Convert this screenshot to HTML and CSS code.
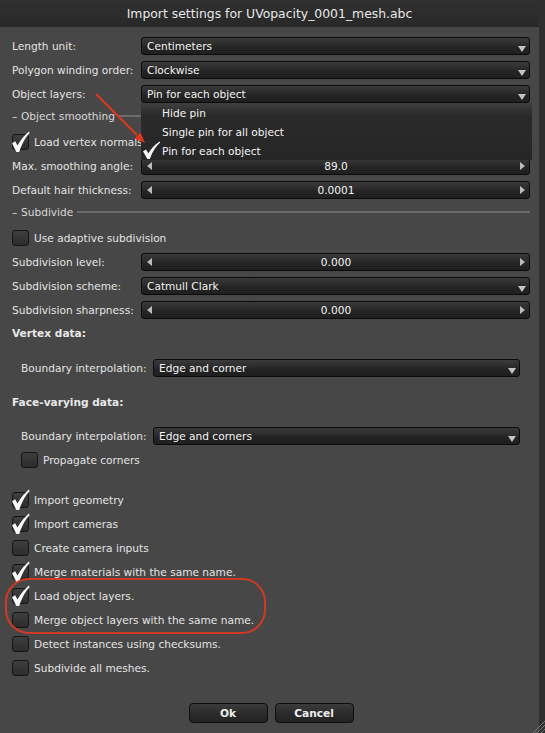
FILE: index.html
```html
<!DOCTYPE html>
<html>
<head>
<meta charset="utf-8">
<link rel="stylesheet" href="styles.css">
</head>
<body>
<div class="dialog">
  <div class="titlebar">Import settings for UVopacity_0001_mesh.abc</div>
  <div class="content">
    <div class="row">
      <span class="label">Length unit:</span>
      <div class="combo"><span>Centimeters</span><svg class="darrow" width="8" height="6" viewBox="0 0 8 6"><polygon points="0,0 8,0 4,6"/></svg></div>
    </div>
    <div class="row">
      <span class="label">Polygon winding order:</span>
      <div class="combo"><span>Clockwise</span><svg class="darrow" width="8" height="6" viewBox="0 0 8 6"><polygon points="0,0 8,0 4,6"/></svg></div>
    </div>
    <div class="row">
      <span class="label">Object layers:</span>
      <div class="combo open"><span>Pin for each object</span><svg class="darrow" width="8" height="6" viewBox="0 0 8 6"><polygon points="0,0 8,0 4,6"/></svg>
        <div class="menu">
          <div class="mi">Hide pin</div>
          <div class="mi">Single pin for all object</div>
          <div class="mi">
            <svg class="mtick" width="18" height="17" viewBox="0 0 18 17"><path d="M0,9.2 L3,7.6 L5.3,11.3 C8.3,6.3 11.8,2.6 16.6,-0.6 L17.2,0.4 C13.2,3.9 9.8,9 6.8,17 L4.3,17 Z"/></svg>
            Pin for each object
          </div>
        </div>
      </div>
    </div>

    <div class="group"><span class="dash">–</span><span>Object smoothing</span><span class="line"></span></div>
    <div class="crow">
      <span class="box"><svg class="tick" width="18" height="21" viewBox="0 0 18 21"><path d="M0,11.2 L3.2,9.3 L5.5,13.4 C8.5,7.8 12.5,3.2 17,-0.5 L17.6,0.9 C13.6,5 10.2,11 7.2,20 L4.4,20 Z"/></svg></span>
      <span>Load vertex normals</span>
    </div>
    <div class="row">
      <span class="label">Max. smoothing angle:</span>
      <div class="slider">
        <svg class="sarrow" width="5" height="8" viewBox="0 0 5 8"><polygon points="5,0 5,8 0,4"/></svg>
        <span class="val">89.0</span>
        <svg class="sarrow" width="5" height="8" viewBox="0 0 5 8"><polygon points="0,0 0,8 5,4"/></svg>
      </div>
    </div>
    <div class="row">
      <span class="label">Default hair thickness:</span>
      <div class="slider">
        <svg class="sarrow" width="5" height="8" viewBox="0 0 5 8"><polygon points="5,0 5,8 0,4"/></svg>
        <span class="val">0.0001</span>
        <svg class="sarrow" width="5" height="8" viewBox="0 0 5 8"><polygon points="0,0 0,8 5,4"/></svg>
      </div>
    </div>

    <div class="group"><span class="dash">–</span><span>Subdivide</span><span class="line"></span></div>
    <div class="crow">
      <span class="box"></span>
      <span>Use adaptive subdivision</span>
    </div>
    <div class="row">
      <span class="label">Subdivision level:</span>
      <div class="slider">
        <svg class="sarrow" width="5" height="8" viewBox="0 0 5 8"><polygon points="5,0 5,8 0,4"/></svg>
        <span class="val">0.000</span>
        <svg class="sarrow" width="5" height="8" viewBox="0 0 5 8"><polygon points="0,0 0,8 5,4"/></svg>
      </div>
    </div>
    <div class="row">
      <span class="label">Subdivision scheme:</span>
      <div class="combo"><span>Catmull Clark</span><svg class="darrow" width="8" height="6" viewBox="0 0 8 6"><polygon points="0,0 8,0 4,6"/></svg></div>
    </div>
    <div class="row">
      <span class="label">Subdivision sharpness:</span>
      <div class="slider">
        <svg class="sarrow" width="5" height="8" viewBox="0 0 5 8"><polygon points="5,0 5,8 0,4"/></svg>
        <span class="val">0.000</span>
        <svg class="sarrow" width="5" height="8" viewBox="0 0 5 8"><polygon points="0,0 0,8 5,4"/></svg>
      </div>
    </div>

    <div class="subhead">Vertex data:</div>
    <div class="row sub first">
      <span class="label">Boundary interpolation:</span>
      <div class="combo"><span>Edge and corner</span><svg class="darrow" width="8" height="6" viewBox="0 0 8 6"><polygon points="0,0 8,0 4,6"/></svg></div>
    </div>

    <div class="subhead second">Face-varying data:</div>
    <div class="row sub second">
      <span class="label">Boundary interpolation:</span>
      <div class="combo"><span>Edge and corners</span><svg class="darrow" width="8" height="6" viewBox="0 0 8 6"><polygon points="0,0 8,0 4,6"/></svg></div>
    </div>
    <div class="crow sub">
      <span class="box"></span>
      <span>Propagate corners</span>
    </div>

    <div class="checklist">
      <div class="crow">
        <span class="box"><svg class="tick" width="18" height="21" viewBox="0 0 18 21"><path d="M0,11.2 L3.2,9.3 L5.5,13.4 C8.5,7.8 12.5,3.2 17,-0.5 L17.6,0.9 C13.6,5 10.2,11 7.2,20 L4.4,20 Z"/></svg></span>
        <span>Import geometry</span>
      </div>
      <div class="crow">
        <span class="box"><svg class="tick" width="18" height="21" viewBox="0 0 18 21"><path d="M0,11.2 L3.2,9.3 L5.5,13.4 C8.5,7.8 12.5,3.2 17,-0.5 L17.6,0.9 C13.6,5 10.2,11 7.2,20 L4.4,20 Z"/></svg></span>
        <span>Import cameras</span>
      </div>
      <div class="crow">
        <span class="box"></span>
        <span>Create camera inputs</span>
      </div>
      <div class="crow">
        <span class="box"><svg class="tick" width="18" height="21" viewBox="0 0 18 21"><path d="M0,11.2 L3.2,9.3 L5.5,13.4 C8.5,7.8 12.5,3.2 17,-0.5 L17.6,0.9 C13.6,5 10.2,11 7.2,20 L4.4,20 Z"/></svg></span>
        <span>Merge materials with the same name.</span>
      </div>
      <div class="crow">
        <span class="box"><svg class="tick" width="18" height="21" viewBox="0 0 18 21"><path d="M0,11.2 L3.2,9.3 L5.5,13.4 C8.5,7.8 12.5,3.2 17,-0.5 L17.6,0.9 C13.6,5 10.2,11 7.2,20 L4.4,20 Z"/></svg></span>
        <span>Load object layers.</span>
      </div>
      <div class="crow">
        <span class="box"></span>
        <span>Merge object layers with the same name.</span>
      </div>
      <div class="crow">
        <span class="box"></span>
        <span>Detect instances using checksums.</span>
      </div>
      <div class="crow">
        <span class="box"></span>
        <span>Subdivide all meshes.</span>
      </div>
    </div>

    <div class="buttons">
      <div class="btn">Ok</div>
      <div class="btn">Cancel</div>
    </div>
  </div>

  <svg class="annot-arrow" width="160" height="160" viewBox="0 0 160 160">
    <line x1="96" y1="94" x2="137" y2="135" />
    <polygon points="145,143 134.6,138.6 140.6,132.6" />
  </svg>
  <div class="annot-ring"></div>
</div>
<svg class="grip" width="14" height="12" viewBox="0 0 14 12">
  <line x1="2" y1="12" x2="14" y2="0"/>
  <line x1="6" y1="12" x2="14" y2="4"/>
  <line x1="10" y1="12" x2="14" y2="8"/>
</svg>
</body>
</html>
```
FILE: styles.css
```css
* { box-sizing: border-box; }
html, body { margin: 0; padding: 0; }
body {
  position: relative;
  width: 545px;
  height: 733px;
  overflow: hidden;
  background: #2f2f2f;
  font-family: "DejaVu Sans", "Liberation Sans", sans-serif;
  font-size: 10.6px;
  color: #e4e4e4;
}
.dialog {
  position: relative;
  width: 539px;
  height: 733px;
  background: #474747;
}
.titlebar {
  height: 27px;
  background: linear-gradient(#313131, #282828);
  display: flex;
  align-items: center;
  justify-content: center;
  font-size: 12.4px;
  color: #e8e8e8;
}
.content {
  display: flex;
  flex-direction: column;
  padding: 7px 9px 0 12px;
}
.row {
  height: 24px;
  display: flex;
  align-items: center;
  flex: none;
}
.label {
  width: 129px;
  flex: none;
  white-space: nowrap;
}
.combo, .slider {
  flex: 1;
  height: 18px;
  border: 1px solid #0b0b0b;
  border-radius: 3px;
  background: linear-gradient(#3a3a3a, #2c2c2c 40%, #232323 60%, #1f1f1f);
  position: relative;
  display: flex;
  align-items: center;
  color: #f4f4f4;
  white-space: nowrap;
}
.combo { padding-left: 5px; }
.darrow {
  position: absolute;
  right: 3px;
  bottom: 2px;
  fill: #c4c4c4;
}
.slider { padding: 0 4px 0 5px; }
.slider .val { flex: 1; text-align: center; }
.sarrow { fill: #bdbdbd; flex: none; }

.menu {
  position: absolute;
  top: calc(100% + 1px);
  left: -1px;
  right: -3px;
  height: 57px;
  background: linear-gradient(#3f3f3f, #2a2a2a 12px, #262626);
  z-index: 5;
}
.mi {
  position: relative;
  height: 19px;
  padding-left: 21px;
  display: flex;
  align-items: center;
  color: #f4f4f4;
}
.mtick {
  position: absolute;
  left: 2px;
  top: 1px;
  fill: #f6f6f6;
  overflow: visible;
}

.group {
  height: 24px;
  padding-bottom: 4px;
  display: flex;
  align-items: center;
  color: #d8d8d8;
  flex: none;
}
.group .dash { width: 9px; }
.group .line {
  flex: 1;
  height: 2px;
  margin-left: 4px;
  background: #6b6b6b;
}
.crow {
  height: 24px;
  display: flex;
  align-items: center;
  gap: 5px;
  flex: none;
}
.box {
  position: relative;
  width: 17px;
  height: 16px;
  flex: none;
  border: 1px solid #151515;
  border-radius: 3px;
  background: linear-gradient(#3e3e3e, #2c2c2c);
}
.tick {
  position: absolute;
  left: -1px;
  top: -3px;
  fill: #f8f8f8;
  overflow: visible;
}
.subhead {
  height: 22px;
  display: flex;
  align-items: center;
  font-weight: bold;
  color: #e8e8e8;
  flex: none;
}
.subhead.second { margin-top: 11px; }
.sub { padding-left: 9px; padding-right: 10px; }
.sub .label { width: 132px; }
.row.sub.first { margin-top: 12px; }
.row.sub.second { margin-top: 11px; }
.checklist {
  margin-top: 16px;
  display: flex;
  flex-direction: column;
}
.buttons {
  margin-top: 23px;
  display: flex;
  justify-content: center;
  gap: 7px;
}
.btn {
  width: 79px;
  height: 20px;
  border: 1px solid #0d0d0d;
  border-radius: 4px;
  background: linear-gradient(#3b3b3b, #2b2b2b 50%, #242424);
  display: flex;
  align-items: center;
  justify-content: center;
  font-weight: bold;
  color: #eeeeee;
}
.annot-arrow {
  position: absolute;
  left: 0;
  top: 0;
  z-index: 10;
}
.annot-arrow line { stroke: #e2361d; stroke-width: 2; }
.annot-arrow polygon { fill: #e2361d; }
.annot-ring {
  position: absolute;
  left: 5px;
  top: 578px;
  width: 261px;
  height: 56px;
  border: 2px solid #cf3a22;
  border-radius: 24px;
}
.grip {
  position: absolute;
  right: 0;
  bottom: 0;
}
.grip line { stroke: #777; stroke-width: 1; }
```
